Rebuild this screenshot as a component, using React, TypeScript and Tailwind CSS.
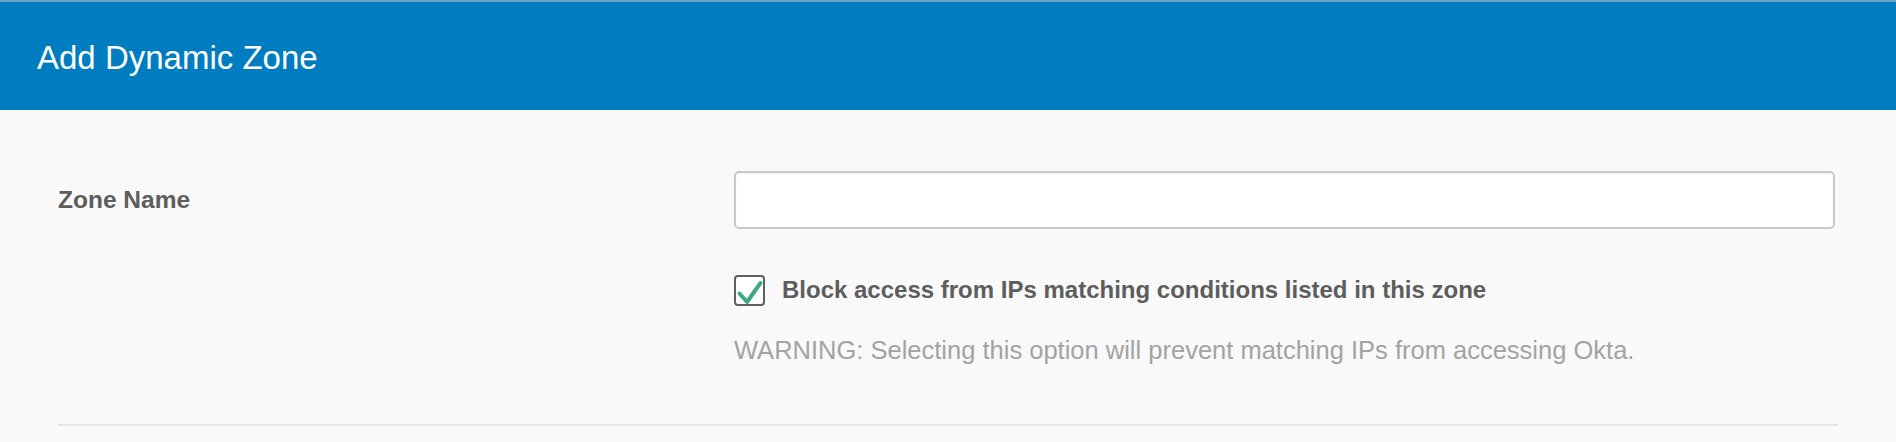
import React from "react";

export default function App() {
  return (
    <div className="min-h-[442px] w-full bg-[#f9f9f9]" style={{ fontFamily: '"Liberation Sans", Arial, sans-serif' }}>
      <div className="h-[110px] bg-[#007dc1] border-t-2 border-[#6c9fc9] flex items-center pl-[37px]">
        <h1 className="text-[33px] text-white font-normal leading-none pt-[2px]">Add Dynamic Zone</h1>
      </div>
      <div className="px-[58px] pt-[61px]">
        <div className="grid grid-cols-[676px_1fr] pr-[3px]">
          <div className="flex items-center h-[58px]">
            <label className="text-[24.5px] font-bold text-[#5d5d5d]">Zone Name</label>
          </div>
          <div>
            <input
              type="text"
              className="block w-full h-[58px] bg-white border-2 border-[#c8c8c8] rounded-[5px] shadow-[inset_0_1px_2px_rgba(0,0,0,0.06)] outline-none px-3 text-[24px]"
            />
            <div className="flex items-center mt-[45px] gap-[17px]">
              <div className="w-[31px] h-[31px] border-2 border-[#5f5f5f] rounded-[4px] bg-white flex items-center justify-center shrink-0">
                <svg width="31" height="31" viewBox="0 0 31 31" className="-m-[2px]">
                  <path d="M5.5 18.5 L13 27 L26.5 8" fill="none" stroke="#3caa82" strokeWidth="4" strokeLinecap="round" strokeLinejoin="round" />
                </svg>
              </div>
              <span className="text-[24px] font-bold text-[#5d5d5d] leading-[32px]">
                Block access from IPs matching conditions listed in this zone
              </span>
            </div>
            <p className="text-[25.5px] text-[#a3a3a3] leading-[32px] mt-[28px]">
              WARNING: Selecting this option will prevent matching IPs from accessing Okta.
            </p>
          </div>
        </div>
        <div className="mt-[58px] h-[2px] bg-[#e6e6e6]" />
      </div>
    </div>
  );
}
